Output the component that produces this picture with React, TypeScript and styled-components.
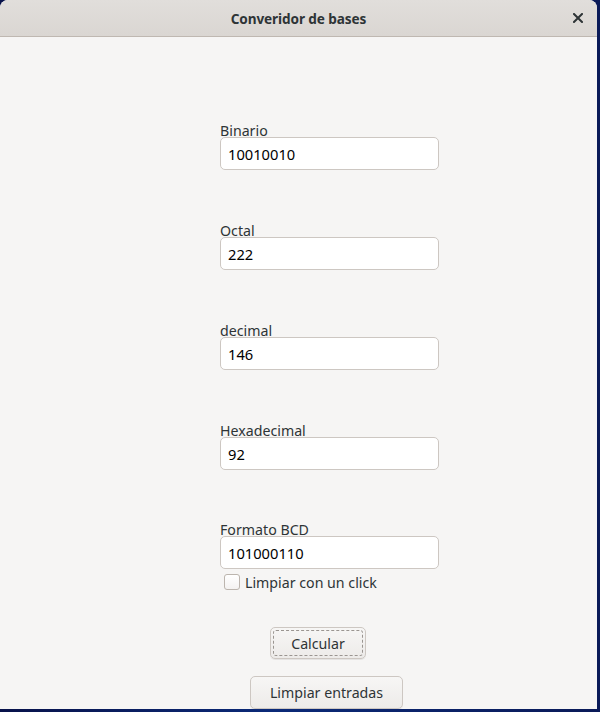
import styled, { createGlobalStyle } from "styled-components";

const GlobalStyle = createGlobalStyle`
  html, body {
    margin: 0;
    padding: 0;
    background: #0a1540;
  }
  * {
    box-sizing: border-box;
  }
`;

const Desktop = styled.div`
  width: 600px;
  height: 712px;
  background: linear-gradient(90deg, #08124a 0%, #0b2a78 45%, #0a1a58 100%);
  overflow: hidden;
`;

const Window = styled.div`
  display: flex;
  flex-direction: column;
  width: 597px;
  height: 709px;
  border-radius: 8px 8px 0 0;
  background: #f6f5f4;
  overflow: hidden;
  font-family: "Noto Sans", "Open Sans", sans-serif;
  color: #2e3436;
`;

const TitleBar = styled.div`
  position: relative;
  display: flex;
  align-items: center;
  justify-content: center;
  height: 37px;
  flex-shrink: 0;
  background: linear-gradient(#e1dedb, #dad6d2);
  border-bottom: 1px solid #bfb8b1;
`;

const Title = styled.span`
  font-weight: 700;
  font-size: 13.6px;
  color: #2e3436;
  letter-spacing: -0.1px;
`;

const CloseButton = styled.button`
  position: absolute;
  right: 10px;
  top: 9px;
  width: 18px;
  height: 18px;
  display: flex;
  align-items: center;
  justify-content: center;
  padding: 0;
  border: none;
  background: transparent;
`;

const Content = styled.div`
  display: flex;
  flex-direction: column;
  padding: 86px 0 0 220px;
`;

const Field = styled.div<{ $gap: number }>`
  display: flex;
  flex-direction: column;
  width: 219px;
  margin-bottom: ${(p) => p.$gap}px;
`;

const Label = styled.label`
  display: block;
  height: 14px;
  line-height: 16px;
  font-size: 14.2px;
  color: #2e3436;
  overflow: visible;
`;

const Entry = styled.input`
  width: 219px;
  height: 33px;
  padding: 0 7px;
  border: 1px solid #cdc7c2;
  border-radius: 5px;
  background: #ffffff;
  font-family: "Noto Sans", "Open Sans", sans-serif;
  font-size: 14.7px;
  color: #000000;
  outline: none;
`;

const CheckRow = styled.label`
  display: flex;
  align-items: center;
  gap: 5px;
  margin: 4px 0 0 4px;
  height: 18px;
  font-size: 14.2px;
  color: #2e3436;
`;

const CheckBox = styled.span`
  width: 16px;
  height: 16px;
  border: 1px solid #bcb5ae;
  border-radius: 3px;
  background: linear-gradient(#ffffff, #f4f2f1);
`;

const Button = styled.button<{
  $offset: number;
  $width: number;
  $height: number;
  $top: number;
  $focus?: boolean;
}>`
  position: relative;
  margin-top: ${(p) => p.$top}px;
  margin-left: ${(p) => p.$offset}px;
  width: ${(p) => p.$width}px;
  height: ${(p) => p.$height}px;
  border: 1px solid #cdc7c2;
  border-radius: 5px;
  background: linear-gradient(#f7f6f5, #edebe9);
  box-shadow: 0 1px 0 rgba(0, 0, 0, 0.07);
  font-family: "Noto Sans", "Open Sans", sans-serif;
  font-size: 14.2px;
  color: #2e3436;
  padding: 0;

  ${(p) =>
    p.$focus &&
    `
    &::after {
      content: "";
      position: absolute;
      inset: 2px;
      border: 1px dashed #9a9591;
      border-radius: 3px;
    }
  `}
`;

const fields = [
  { label: "Binario", value: "10010010" },
  { label: "Octal", value: "222" },
  { label: "decimal", value: "146" },
  { label: "Hexadecimal", value: "92" },
  { label: "Formato BCD", value: "101000110" },
];

export default function App() {
  return (
    <>
      <GlobalStyle />
      <Desktop>
        <Window>
          <TitleBar>
            <Title>Converidor de bases</Title>
            <CloseButton aria-label="Cerrar">
              <svg width="10" height="10" viewBox="0 0 10 10">
                <path d="M1 1 L9 9 M9 1 L1 9" stroke="#2e3436" strokeWidth="2" strokeLinecap="square" />
              </svg>
            </CloseButton>
          </TitleBar>
          <Content>
            {fields.map((f, i) => (
              <Field key={f.label} $gap={i === fields.length - 1 ? 0 : i === fields.length - 2 ? 52 : 53}>
                <Label>{f.label}</Label>
                <Entry defaultValue={f.value} />
              </Field>
            ))}
            <CheckRow>
              <CheckBox />
              Limpiar con un click
            </CheckRow>
            <Button $top={36} $offset={50} $width={96} $height={32} $focus>
              Calcular
            </Button>
            <Button $top={17} $offset={30} $width={153} $height={33}>
              Limpiar entradas
            </Button>
          </Content>
        </Window>
      </Desktop>
    </>
  );
}
